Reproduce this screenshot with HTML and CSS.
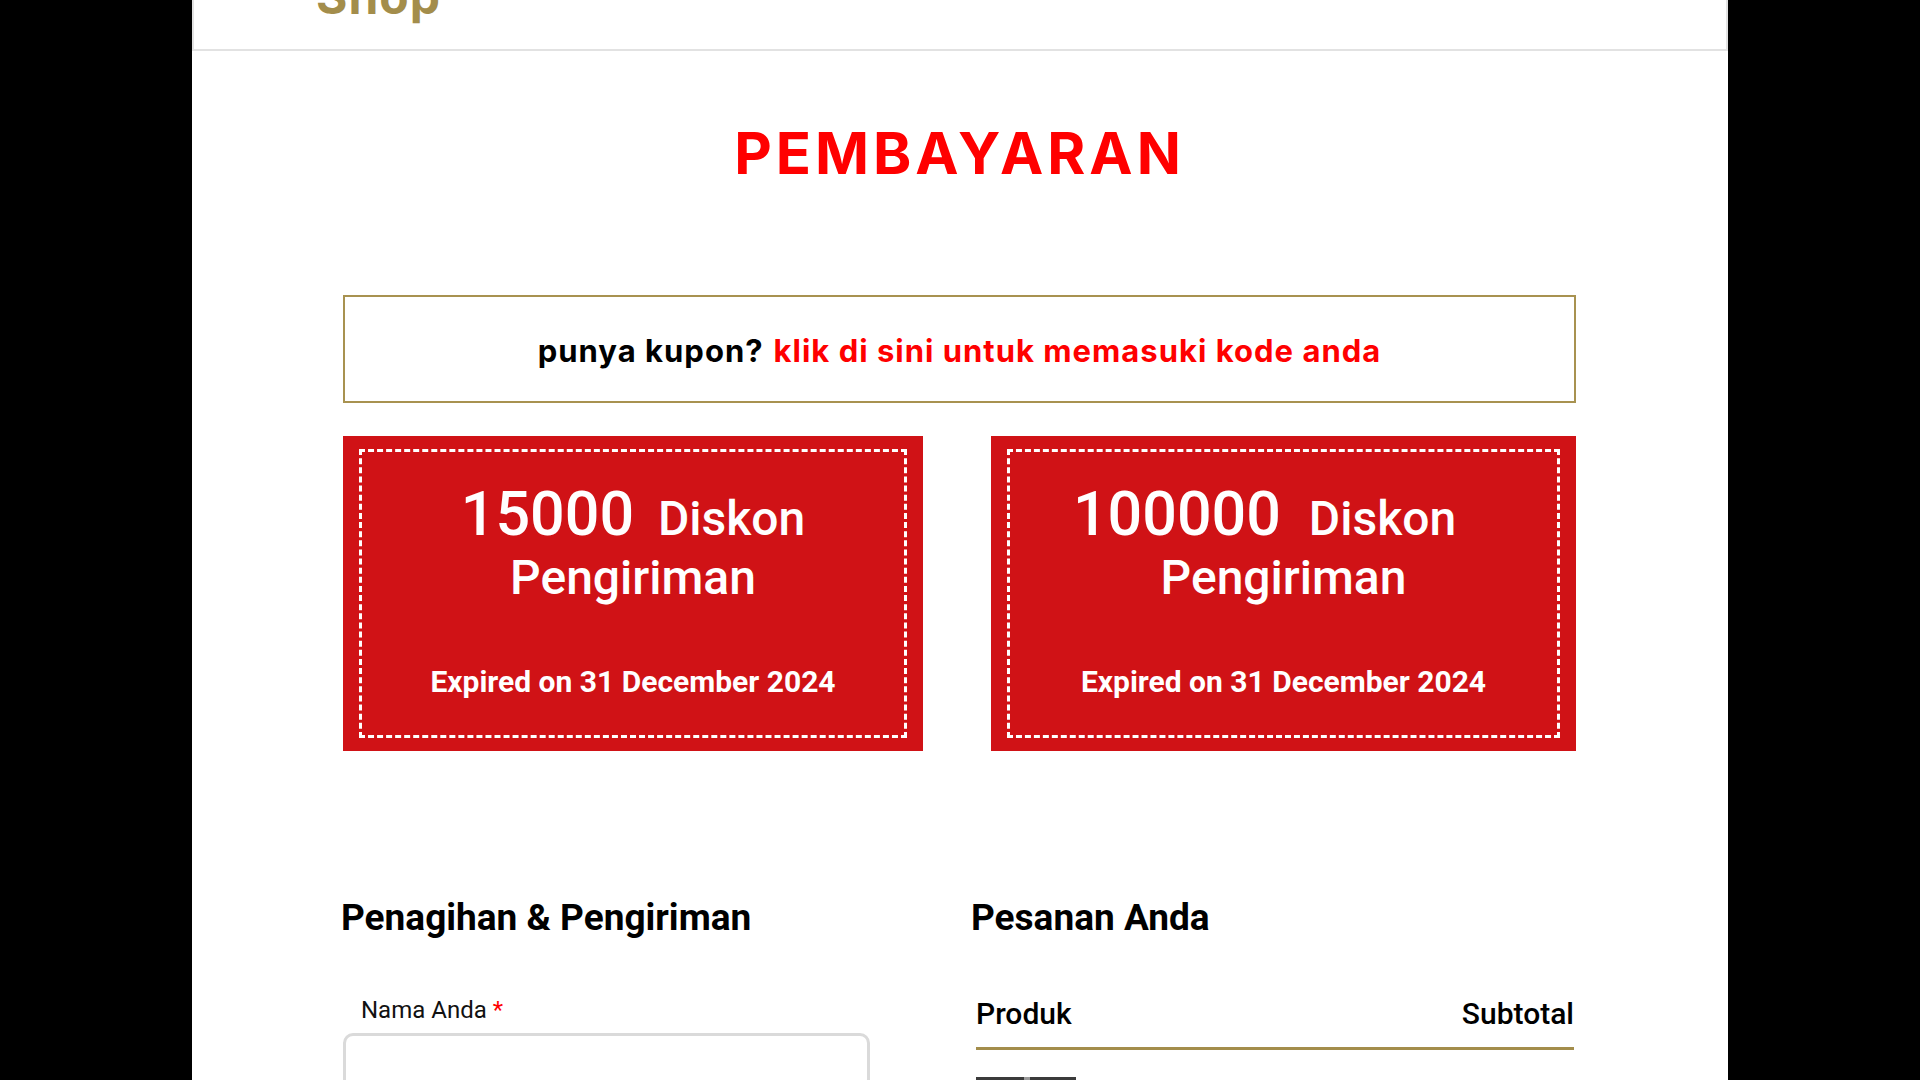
FILE: index.html
```html
<!DOCTYPE html>
<html lang="id">
<head>
<meta charset="utf-8">
<title>Pembayaran</title>
<link rel="stylesheet" href="styles.css">
</head>
<body>
<div class="page">
  <header class="site-header">
    <div class="logo">Shop</div>
  </header>

  <main class="main">
    <h1 class="title">PEMBAYARAN</h1>

    <div class="coupon-prompt">
      <span class="prompt-q">punya kupon?</span>
      <a class="prompt-link" href="#">klik di sini untuk memasuki kode anda</a>
    </div>

    <div class="coupons">
      <div class="coupon-card">
        <div class="coupon-inner">
          <div class="c-line1"><span class="c-num">15000</span> Diskon</div>
          <div class="c-line2">Pengiriman</div>
          <div class="c-exp">Expired on 31 December 2024</div>
        </div>
      </div>
      <div class="coupon-card">
        <div class="coupon-inner">
          <div class="c-line1 c-line1--wide"><span class="c-num c-num--wide">100000</span> Diskon</div>
          <div class="c-line2">Pengiriman</div>
          <div class="c-exp">Expired on 31 December 2024</div>
        </div>
      </div>
    </div>

    <div class="checkout">
      <section class="billing">
        <h2 class="section-title">Penagihan &amp; Pengiriman</h2>
        <label class="field-label">Nama Anda <span class="req">*</span></label>
        <div class="input"></div>
      </section>
      <section class="order">
        <h2 class="section-title">Pesanan Anda</h2>
        <div class="order-head">
          <span>Produk</span>
          <span>Subtotal</span>
        </div>
        <div class="order-row">
          <div class="thumb"><span class="thumb-spot"></span></div>
        </div>
      </section>
    </div>
  </main>
</div>
</body>
</html>
```

FILE: styles.css
```css
html, body {
  margin: 0;
  padding: 0;
  background: #000;
  height: 100%;
  overflow: hidden;
}

.page {
  width: 1536px;
  margin: 0 auto;
  background: #fff;
  min-height: 100vh;
  font-family: Roboto, "Liberation Sans", sans-serif;
  color: #111;
}

.site-header {
  height: 49px;
  border: 2px solid #e2e2e2;
  border-top: none;
  overflow: hidden;
}

.logo {
  font-family: Inter, "Liberation Sans", sans-serif;
  font-weight: 700;
  font-size: 48px;
  line-height: 48px;
  letter-spacing: 1px;
  color: #a38d4b;
  margin: -27px 0 0 122px;
}

.main {
  padding: 0 152px 200px 151px;
}

.title {
  margin: 67px 0 0;
  font-family: Inter, "Liberation Sans", sans-serif;
  font-weight: 700;
  font-size: 58px;
  line-height: 70px;
  letter-spacing: 4px;
  color: #ff0000;
  text-align: center;
}

.coupon-prompt {
  margin-top: 107px;
  height: 108px;
  box-sizing: border-box;
  border: 2px solid #a89250;
  display: flex;
  align-items: center;
  justify-content: center;
  gap: 10px;
  padding-top: 4px;
  font-family: Inter, "Liberation Sans", sans-serif;
  font-weight: 700;
  font-size: 31px;
  line-height: 36px;
  letter-spacing: 1px;
}

.prompt-q {
  color: #000;
}

.prompt-link {
  color: #ff0000;
  text-decoration: none;
}

.coupons {
  margin-top: 33px;
  display: grid;
  grid-template-columns: 580px 585px;
  justify-content: space-between;
}

.coupon-card {
  background: #d01216;
  height: 315px;
  box-sizing: border-box;
  padding: 13px 16px;
}

.coupon-inner {
  height: 100%;
  box-sizing: border-box;
  border: 3px dashed #fff;
  color: #fff;
  text-align: center;
  padding-top: 33px;
  font-weight: 500;
}

.c-line1 {
  font-size: 48px;
  line-height: 59px;
}

.c-line1--wide {
  padding-right: 38px;
}

.c-num {
  font-size: 61px;
  line-height: 59px;
  margin-right: 12px;
}

.c-num--wide {
  margin-right: 16px;
}

.c-line2 {
  font-size: 48px;
  line-height: 59px;
}

.c-exp {
  margin-top: 57px;
  font-size: 30px;
  line-height: 36px;
  font-weight: 700;
}

.checkout {
  margin-top: 145px;
  display: grid;
  grid-template-columns: 1fr 603px;
  gap: 31px;
}

.section-title {
  margin: 0 0 0 -2px;
  font-size: 37px;
  line-height: 44px;
  font-weight: 700;
  color: #000;
}

.field-label {
  display: block;
  margin-top: 56px;
  padding-left: 18px;
  font-size: 24px;
  line-height: 28px;
  color: #111;
}

.req {
  color: #ff0000;
}

.input {
  margin-top: 9px;
  width: 527px;
  height: 56px;
  box-sizing: border-box;
  border: 3px solid #dadada;
  border-radius: 10px;
}

.order-head {
  margin: 56px 2px 0 3px;
  display: flex;
  justify-content: space-between;
  font-size: 30px;
  line-height: 36px;
  font-weight: 500;
  color: #000;
  padding-bottom: 15px;
  border-bottom: 3px solid #a38d4b;
}

.order-row {
  margin: 27px 2px 0 3px;
}

.thumb {
  width: 100px;
  height: 80px;
  background: #3b3b3b;
  display: flex;
  padding-left: 48px;
  box-sizing: border-box;
}

.thumb-spot {
  width: 6px;
  height: 6px;
  background: #9a9a9a;
}
```
